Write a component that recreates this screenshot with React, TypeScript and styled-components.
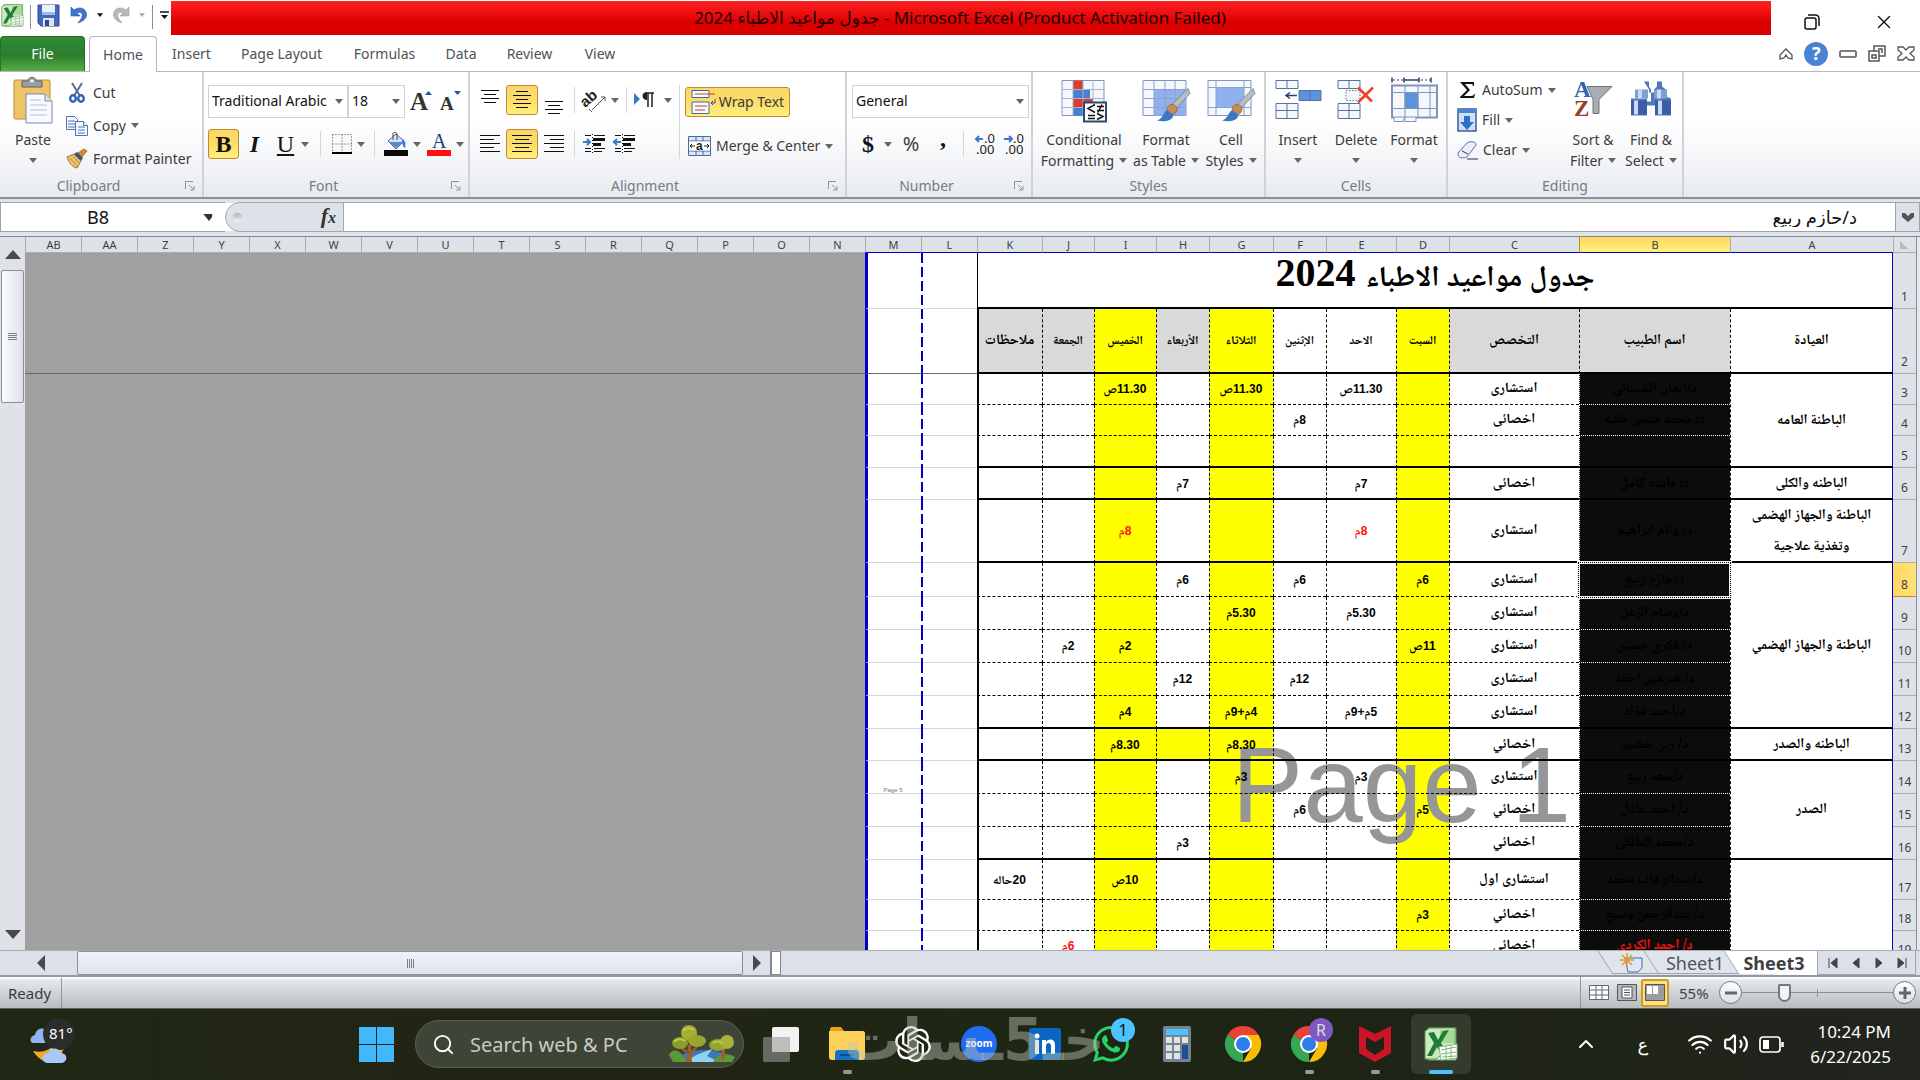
import React from "react";
import styled, { createGlobalStyle, css } from "styled-components";
import { SiOpenai, SiWhatsapp } from "react-icons/si";
import { ChevronUp, Wifi, Volume2, X, Search } from "lucide-react";

const ui = `"Segoe UI", "Noto Sans", "Open Sans", "DejaVu Sans", sans-serif`;
const arabic = `"Traditional Arabic", "Noto Naskh Arabic", "DejaVu Sans", sans-serif`;

const Global = createGlobalStyle`
  * { box-sizing: border-box; }
  body { margin: 0; overflow: hidden; font: 14px/20px ${ui}; color: #3b3b3b; background: #fff; }
  button { font: inherit; color: inherit; border: 0; padding: 0; background: none; }
  input, select { font: inherit; color: #111; border: 0; padding: 0; margin: 0; background: none; outline: 0; border-radius: 0; }
  svg { display: block; flex: none; overflow: visible; }
`;

const Page = styled.div`
  height: 100vh;
  display: flex;
  flex-direction: column;
`;

/* ---------- title bar ---------- */
const TitleBar = styled.header`
  height: 36px;
  flex: none;
  display: flex;
`;
const QuickAccess = styled.div`
  width: 171px;
  flex: none;
  display: flex;
  align-items: center;
  padding: 0 0 6px 1px;
`;
const QuickSep = styled.i<{ $gap: number }>`
  width: 1px;
  height: 24px;
  background: #8e8e8e;
  margin: 4px ${(p) => p.$gap}px 0;
`;
const QuickHistory = styled.div`
  display: flex;
  align-items: center;
  gap: 9px;
  margin-left: 10px;
`;
const TitleText = styled.h1`
  flex: 1;
  margin: 1px 0 1px;
  font: 17px/34px ${ui};
  color: #1a0000;
  text-align: center;
  padding-right: 22px;
  background: linear-gradient(#ff2222, #f01212 30%, #dd0000 62%, #da0000);
`;
const WindowButtons = styled.div`
  width: 149px;
  flex: none;
  display: flex;
  align-items: center;
  justify-content: space-between;
  padding: 8px 25px 0 33px;
  color: #111;
`;

/* ---------- ribbon ---------- */
const TabRow = styled.nav`
  height: 36px;
  flex: none;
  display: flex;
  align-items: stretch;
  border-bottom: 1px solid #b4b8be;
`;
const Tab = styled.button<{ $w: number; $kind?: "file" | "active" }>`
  width: ${(p) => p.$w}px;
  line-height: 36px;
  color: #4d5258;
  ${(p) =>
    p.$kind === "file" &&
    css`
      color: #fff;
      margin-right: 4px;
      border: 1px solid #2c6b2c;
      border-bottom: 0;
      border-radius: 4px 4px 0 0;
      line-height: 34px;
      background: linear-gradient(#2f8a35, #2c7d2c 55%, #58ad45);
    `}
  ${(p) =>
    p.$kind === "active" &&
    css`
      border: 1px solid #b4b8be;
      border-bottom: 0;
      border-radius: 4px 4px 0 0;
      line-height: 34px;
      height: 36px;
      background: #fff;
    `}
`;
const TabTools = styled.div`
  margin-left: auto;
  display: flex;
  align-items: center;
  gap: 11px;
  padding-right: 5px;
`;
const Ribbon = styled.section`
  height: 127px;
  flex: none;
  display: flex;
  border-bottom: 2px solid #8b9097;
  background: linear-gradient(#ffffff 40%, #f6f7f9 65%, #e8ebef);
`;
const Group = styled.div<{ $w: number }>`
  width: ${(p) => p.$w}px;
  flex: none;
  display: flex;
  flex-direction: column;
  border-right: 2px solid #cfd3d9;
`;
const GroupBody = styled.div<{ $pad?: string; $gap?: number }>`
  height: 103px;
  display: flex;
  padding: ${(p) => p.$pad || "0"};
  gap: ${(p) => p.$gap || 0}px;
`;
const GroupLabel = styled.div<{ $open?: boolean }>`
  display: flex;
  align-items: center;
  color: #737c88;
  padding-right: ${(p) => (p.$open ? 7 : 0)}px;
  line-height: 22px;
  span {
    flex: 1;
    text-align: center;
    padding-right: ${(p) => (p.$open ? 8 : 0)}px;
  }
`;
const Stack = styled.div<{ $gap?: number; $pad?: string; $w?: number }>`
  display: flex;
  flex-direction: column;
  gap: ${(p) => p.$gap || 0}px;
  padding: ${(p) => p.$pad || "0"};
  width: ${(p) => (p.$w ? p.$w + "px" : "auto")};
  flex: none;
`;
const Line = styled.div<{ $h?: number; $gap?: number; $ml?: number }>`
  display: flex;
  align-items: center;
  height: ${(p) => p.$h || 30}px;
  gap: ${(p) => p.$gap || 0}px;
  margin-left: ${(p) => p.$ml || 0}px;
`;
const BigButton = styled.button<{ $w: number }>`
  width: ${(p) => p.$w}px;
  flex: none;
  display: flex;
  flex-direction: column;
  align-items: center;
  white-space: nowrap;
  line-height: 21px;
  > svg:first-child {
    height: 47px;
    margin: 5px 0;
  }
`;
const TextRow = styled.span`
  display: flex;
  align-items: center;
  gap: 5px;
  height: 21px;
`;
const SmallButton = styled.button<{ $h?: number; $pl?: number }>`
  height: ${(p) => p.$h || 33}px;
  padding-left: ${(p) => p.$pl || 0}px;
  display: flex;
  align-items: center;
  gap: 5px;
  white-space: nowrap;
`;
const Tool = styled.button<{ $w: number; $on?: boolean; $serif?: boolean; $thin?: boolean; $size?: number; $lift?: number }>`
  width: ${(p) => p.$w}px;
  height: 30px;
  flex: none;
  display: flex;
  align-items: center;
  justify-content: center;
  gap: 3px;
  white-space: nowrap;
  color: ${(p) => (p.$serif ? "#111" : "inherit")};
  ${(p) => p.$size && `font-size: ${p.$size}px;`}
  ${(p) => p.$serif && `font: ${p.$thin ? 400 : 700} 24px/28px "Liberation Serif", serif;`}
  ${(p) => p.$lift && `padding-bottom: ${p.$lift}px;`}
  ${(p) =>
    p.$on &&
    css`
      border: 1px solid #c28a30;
      border-radius: 3px;
      background: linear-gradient(#fbd765, #fddc6c 50%, #fff07a);
    `}
`;
const Divider = styled.i<{ $h?: number; $m: number }>`
  width: 1px;
  height: ${(p) => p.$h || 26}px;
  margin: 0 ${(p) => p.$m}px;
  background: #d3d6db;
  flex: none;
`;
const Combo = styled.div<{ $w: number }>`
  width: ${(p) => p.$w}px;
  height: 33px;
  flex: none;
  display: flex;
  align-items: center;
  border: 1px solid #cdd2d8;
  background: #fff;
  padding: 0 4px 0 3px;
  select {
    appearance: none;
    flex: 1;
    min-width: 0;
    height: 28px;
    padding-bottom: 2px;
  }
`;

/* ---------- formula bar ---------- */
const FormulaBar = styled.div`
  height: 38px;
  flex: none;
  display: flex;
  padding: 3px 0 4px;
  background: #dfe3ea;
  border-bottom: 1px solid #85898f;
`;
const NameBox = styled.div`
  width: 225px;
  display: flex;
  align-items: center;
  border: 1px solid #9ea3aa;
  border-width: 1px 0 1px 1px;
  background: #fff;
  padding-right: 10px;
  input {
    width: 194px;
    text-align: center;
    font-size: 18px;
    margin-right: 8px;
  }
`;
const FxPill = styled.div`
  width: 119px;
  display: flex;
  align-items: center;
  justify-content: space-between;
  border: 1px solid #a4a9b0;
  border-radius: 16px 0 0 16px;
  background: #dde2e8;
  padding: 0 7px;
  box-shadow: -14px 0 0 -1px #fff;
  i {
    width: 9px;
    height: 9px;
    border-radius: 5px;
    background: linear-gradient(#aeb4bb, #f4f6f8);
  }
  b {
    font: italic bold 22px/24px "Liberation Serif", serif;
    color: #333;
  }
  small {
    font-size: 16px;
  }
`;
const FormulaInput = styled.input`
  && {
    flex: 1;
    min-width: 0;
    background: #fff;
    border-top: 1px solid #9ea3aa;
    border-bottom: 1px solid #9ea3aa;
    padding: 0 38px;
    font-size: 18px;
  }
`;
const FormulaDrop = styled.button`
  width: 25px;
  display: flex;
  align-items: center;
  justify-content: center;
  border: 1px solid #9ea3aa;
  background: #dde2e8;
`;

/* ---------- sheet ---------- */
const SheetArea = styled.main`
  flex: 1;
  min-height: 0;
  display: flex;
  background: #a0a0a0;
`;
const VScroll = styled.div`
  width: 25px;
  flex: none;
  display: flex;
  flex-direction: column;
  align-items: center;
  background: #dfe3e8;
  padding: 9px 0 8px;
`;
const VThumb = styled.div`
  width: 23px;
  height: 133px;
  margin: 8px 0 auto;
  border: 1px solid #8b9097;
  border-radius: 2px;
  background: linear-gradient(90deg, #fbfcfd, #dde1e7);
  display: flex;
  align-items: center;
  justify-content: center;
`;
const Canvas = styled.div`
  flex: 1;
  min-width: 0;
  overflow: hidden;
  position: relative;
`;
const Edge = styled.div`
  width: 4px;
  flex: none;
  background: #e4e7ee;
  border-left: 1px solid #8b9097;
`;
const Grid = styled.table`
  table-layout: fixed;
  border-collapse: separate;
  border-spacing: 0;
  width: 1891px;
  td,
  th {
    padding: 0;
  }
`;
const ColHead = styled.th<{ $on?: boolean; $page?: boolean }>`
  height: 16px;
  font: 11px/14px ${ui};
  color: #3c4148;
  background: ${(p) => (p.$on ? "linear-gradient(#ffd75e, #fff07e)" : "#dde2e7")};
  border-left: 1px solid ${(p) => (p.$on ? "#c28a30" : "#a9aeb5")};
  border-bottom: 1px solid ${(p) => (p.$page ? "#0000c8" : "#a9aeb5")};
  svg {
    margin: 0 8px;
  }
`;
const RowHead = styled.th<{ $on?: boolean }>`
  font: 12px/16px ${ui};
  color: #3c4148;
  vertical-align: bottom;
  && {
    padding: 0 0 3px 0;
  }
  background: ${(p) => (p.$on ? "linear-gradient(90deg, #ffd75e, #ffe27a)" : "#dde2e7")};
  border-bottom: 1px solid ${(p) => (p.$on ? "#c28a30" : "#a9aeb5")};
`;
type CellProps = {
  $bg?: string;
  $left?: string;
  $bottom?: string;
  $right?: string;
  $color?: string;
  $size?: number;
  $digits?: boolean;
};
const Cell = styled.td<CellProps>`
  position: relative;
  text-align: center;
  vertical-align: middle;
  background: ${(p) => p.$bg || "#fff"};
  color: ${(p) => p.$color || "#000"};
  font: bold ${(p) => p.$size || 14}px/31px ${(p) => (p.$digits ? `"Liberation Sans", ${arabic}` : arabic)};
  white-space: nowrap;
  &::after {
    content: "";
    position: absolute;
    inset: 0;
    z-index: 2;
    border-left: ${(p) => p.$left || "0"};
    border-right: ${(p) => p.$right || "0"};
    border-bottom: ${(p) => p.$bottom || "0"};
  }
  span {
    position: relative;
    z-index: 3;
    white-space: pre-line;
  }
`;
const TitleCell = styled(Cell)`
  font: bold 40px/40px "Liberation Serif", ${arabic};
  vertical-align: top;
  b {
    font-size: 29px;
  }
`;
const Outside = styled.td<{ $line?: boolean }>`
  background: #a0a0a0;
  border-bottom: ${(p) => (p.$line ? "1px solid #6a6a6a" : "0")};
`;
const ActiveCell = styled(Cell)`
  &::after {
    inset: -2px;
    z-index: 4;
    border: 3px solid #f4f4f4;
    outline: 1px dotted #000;
    outline-offset: -2px;
  }
`;
const PageBreak = styled(Cell)`
  &::before {
    content: "";
    position: absolute;
    inset: 0 auto 0 0;
    width: 2px;
    z-index: 3;
    background: repeating-linear-gradient(#0000c8 0 10px, #fff 10px 14px);
  }
`;
const MarkCell = styled(Cell)`
  vertical-align: bottom;
  line-height: 8px;
`;
const PageMark = styled.div`
  position: absolute;
  z-index: 1;
  right: 345px;
  top: 486px;
  font: 107px/124px "Liberation Sans", Arial, sans-serif;
  color: #969696;
`;
const TinyMark = styled.span`
  && {
    font: 6px/8px "Liberation Sans", sans-serif;
    color: #777;
  }
`;

/* ---------- bottom strips ---------- */
const TabStrip = styled.div`
  height: 25px;
  flex: none;
  display: flex;
  background: #dce1e9;
  border-top: 1px solid #a9aeb5;
`;
const HScroll = styled.div`
  width: 745px;
  margin-left: 25px;
  max-width: 50%;
  display: flex;
  align-items: center;
  gap: 6px;
  padding: 0 5px 0 8px;
`;
const HThumb = styled.div`
  flex: 1;
  margin-left: 22px;
  height: 24px;
  border: 1px solid #8b9097;
  border-radius: 2px;
  background: linear-gradient(#f0f3f8, #dfe3ea);
  display: flex;
  align-items: center;
  justify-content: center;
`;
const Split = styled.i`
  width: 11px;
  height: 24px;
  border: 2px solid #85898f;
  border-width: 1px 1px 1px 2px;
  background: #fff;
`;
const SheetTabs = styled.div`
  margin-left: auto;
  display: flex;
`;
const SheetTab = styled.button<{ $w: number; $on?: boolean }>`
  width: ${(p) => p.$w}px;
  position: relative;
  z-index: 0;
  display: flex;
  align-items: center;
  justify-content: center;
  font-size: 18px;
  font-weight: ${(p) => (p.$on ? 700 : 400)};
  color: ${(p) => (p.$on ? "#3f3f3f" : "#4f555c")};
  padding-left: ${(p) => (p.$on ? 0 : 8)}px;
  ${(p) => p.$on && "background: linear-gradient(90deg, transparent 50%, #fff 50%);"}
  &::before {
    content: "";
    position: absolute;
    z-index: -1;
    inset: 0 ${(p) => (p.$on ? 10 : 0)}px 1px 0;
    background: ${(p) => (p.$on ? "#fff" : "#dfe5ea")};
    border-left: 1px solid #a0a5ad;
    border-bottom: ${(p) => (p.$on ? "0" : "1px solid #a0a5ad")};
    transform: skewX(33deg);
  }
`;
const NavButtons = styled.div`
  width: 99px;
  margin-right: 4px;
  display: flex;
  align-items: center;
  justify-content: space-between;
  padding: 0 8px 0 10px;
  border: 1px solid #a0a5ad;
  border-top: 0;
`;
const StatusBar = styled.footer`
  height: 34px;
  flex: none;
  display: flex;
  align-items: center;
  border-top: 2px solid #9297a3;
  border-bottom: 1px solid #5b5f60;
  background: linear-gradient(#ffffff, #e4e7ea 12%, #d3d7dc 45%, #b9bdc1);
`;
const Ready = styled.div`
  width: 62px;
  padding-left: 8px;
  font-size: 15px;
  line-height: 30px;
  border-right: 1px solid #8f9499;
`;
const StatusRight = styled.div`
  margin-left: auto;
  display: flex;
  align-items: center;
  height: 31px;
  border-left: 1px solid #8f9499;
  padding: 0 4px 0 4px;
`;
const ViewButton = styled.button<{ $on?: boolean }>`
  width: 28px;
  height: 28px;
  display: flex;
  align-items: center;
  justify-content: center;
  ${(p) =>
    p.$on &&
    css`
      border: 2px solid #d09a2c;
      border-radius: 3px;
      background: #ffe37a;
    `}
`;
const ZoomValue = styled.span`
  width: 50px;
  padding-left: 10px;
  font-size: 15px;
  color: #444;
`;
const RoundButton = styled.button`
  width: 23px;
  height: 23px;
  border: 1px solid #75797e;
  border-radius: 50%;
  background: linear-gradient(#fff, #dcdfe2);
  display: flex;
  align-items: center;
  justify-content: center;
`;
const Slider = styled.input`
  && {
    appearance: none;
    width: 151px;
    height: 20px;
    background: linear-gradient(#8d9196, #8d9196) 0 9px / 100% 1px no-repeat,
      linear-gradient(#8d9196, #8d9196) 50% 6px / 1px 8px no-repeat;
  }
  &::-webkit-slider-thumb {
    appearance: none;
    width: 13px;
    height: 18px;
    border: 2px solid #75797e;
    border-radius: 2px 2px 7px 7px;
    background: #f2f3f4;
  }
`;

/* ---------- taskbar ---------- */
const Taskbar = styled.footer`
  height: 71px;
  flex: none;
  display: grid;
  grid-template-columns: 343px 1fr auto;
  align-items: center;
  background: linear-gradient(90deg, #1f2715, #232514 25%, #1e2614 50%, #1e2415 75%, #22241f);
  color: #fff;
  padding-bottom: 1px;
`;
const Weather = styled.button`
  width: 60px;
  margin-left: 24px;
`;
const Apps = styled.div`
  position: relative;
  display: flex;
  align-items: center;
`;
const SearchBox = styled.label`
  width: 329px;
  height: 48px;
  margin: 0 4px 0 6px;
  display: flex;
  align-items: center;
  border: 1px solid #5c6152;
  border-radius: 24px;
  background: #3e4436;
  padding: 0 8px 0 16px;
  gap: 15px;
  input {
    flex: 1;
    min-width: 0;
    color: #fff;
    font-size: 20px;
  }
  input::placeholder {
    color: #c9ccc3;
    opacity: 1;
  }
`;
const AppButton = styled.button<{ $on?: boolean; $run?: boolean }>`
  width: 60px;
  height: 60px;
  margin: 0 3px;
  flex: none;
  position: relative;
  border-radius: 6px;
  display: flex;
  align-items: center;
  justify-content: center;
  background: ${(p) => (p.$on ? "#343a2c" : "none")};
  &::after {
    content: "";
    position: absolute;
    bottom: 0;
    left: ${(p) => (p.$on ? 18 : 26)}px;
    width: ${(p) => (p.$on ? 24 : 9)}px;
    height: 4px;
    border-radius: 2px;
    background: ${(p) => (p.$on ? "#4cc2ff" : p.$run ? "#9a9a9a" : "none")};
  }
`;
const Badge = styled.i<{ $bg: string; $fg: string }>`
  position: absolute;
  top: 4px;
  right: 6px;
  width: 24px;
  height: 24px;
  border-radius: 50%;
  font: 16px/24px ${ui};
  text-align: center;
  color: ${(p) => p.$fg};
  background: ${(p) => p.$bg};
`;
const Khamsat = styled.div`
  position: absolute;
  left: 501px;
  top: -6px;
  z-index: 2;
  font: bold 58px/64px "DejaVu Sans", sans-serif;
  color: rgba(190, 195, 185, 0.45);
  pointer-events: none;
`;
const Tray = styled.div`
  display: flex;
  align-items: center;
  padding-right: 29px;
`;
const Lang = styled.button`
  margin: 0 39px 0 40px;
  font-size: 18px;
`;
const TrayIcon = styled.span`
  margin: 0 10px;
`;
const Clock = styled.time`
  font-size: 17px;
  line-height: 25px;
  text-align: right;
  margin-left: 26px;
`;

/* ---------- icons ---------- */
const Caret = ({ c = "#666", s = 8 }: { c?: string; s?: number }) => (
  <svg width={s} height={s / 2 + 1} viewBox="0 0 8 5">
    <path d="M0 0h8L4 5z" fill={c} />
  </svg>
);
const Launcher = () => (
  <svg width="10" height="10" viewBox="0 0 10 10" fill="none" stroke="#8b929c">
    <path d="M.5 8V.5H8M4 4l4 4M9 5v4H5" />
  </svg>
);
const arrowPaths = {
  up: "M0 13 8 4l8 9z",
  down: "M0 4 8 13l8-9z",
  left: "M12 0 4 8l8 8z",
  right: "M4 0l8 8-8 8z",
};
const Arrow = ({ to }: { to: keyof typeof arrowPaths }) => (
  <svg width="16" height="16" viewBox="0 0 16 16">
    <path d={arrowPaths[to]} fill="#4a4a4a" />
  </svg>
);
const Grip = ({ v }: { v?: boolean }) => (
  <svg width="9" height="9" viewBox="0 0 9 9" stroke="#7b8087">
    <path d={v ? "M0 1.500h9M0 3.500h9M0 5.500h9M0 7.500h9" : "M1.500 0v9M3.500 0v9M5.500 0v9M7.500 0v9"} />
  </svg>
);
const ExcelIcon = ({ s }: { s: number }) => (
  <svg width={s} height={s} viewBox="0 0 34 34">
    <path d="M4 1h28v32H4z" fill="#f2f8ef" stroke="#5e9e58" />
    <path d="M1 4 6 1h25v17L12 32H1z" fill="#cfe8c4" stroke="#4c9a4a" />
    <path d="M16 3h14v13H16z" fill="#a7d896" />
    <path d="m4 6 6-1 4 8 5-9 6-1-8 13 7 11-6 1-5-8-5 9H3l7-13z" fill="#1e7d35" />
    <path d="m15 20 18-3v14l-16 2z" fill="#fff" stroke="#8bbd83" />
    <path d="m17 23 15-3M17 27l15-2M18 30l14-1M22 19v13M27 18v14" stroke="#7fb777" />
  </svg>
);
const SaveIcon = () => (
  <svg width="23" height="23" viewBox="0 0 23 23">
    <path d="M1 1h21v21H4l-3-3z" fill="#4268bd" stroke="#2c4a94" />
    <path d="M5 1h13v10H5z" fill="#eaf1fc" />
    <path d="M5 8h13v3H5z" fill="#9fbbe8" />
    <path d="M6 14h11v8H6z" fill="#dfe4ee" />
    <path d="M8 16h4v6H8z" fill="#2c4a94" />
  </svg>
);
const UndoIcon = ({ redo }: { redo?: boolean }) => (
  <svg width="18" height="18" viewBox="0 0 18 18">
    <g transform={redo ? "matrix(-1 0 0 1 18 0)" : undefined}>
      <path d="M1 1v9h9L7 7c4-2 7 1 4 6l-3 4c7-2 10-7 8-11C14 1 8 1 4 4z" fill={redo ? "#b5b8bc" : "#3f76cf"} stroke={redo ? "#9a9da1" : "#2a55a5"} strokeWidth=".6" />
    </g>
  </svg>
);
const PasteIcon = () => (
  <svg width="40" height="47" viewBox="0 0 40 47">
    <rect x="1" y="3" width="36" height="39" rx="1.5" fill="#efc565" stroke="#b98c35" />
    <path d="M9 4h6c0-5 8-5 8 0h6v6H9z" fill="#9aa0a6" stroke="#5d6268" />
    <circle cx="19" cy="4" r="1.6" fill="#fff" />
    <path d="M13 17h19l7 7v22H13z" fill="#f7faff" stroke="#7488ab" />
    <path d="M32 17v7h7" fill="#dbe5f6" stroke="#7488ab" />
    <path d="M17 23h11M17 28h17M17 33h17M17 38h17" stroke="#b3c0d8" />
  </svg>
);
const CutIcon = () => (
  <svg width="22" height="20" viewBox="0 0 22 20" fill="none">
    <path d="m6 0 8 13M16 0 8 13" stroke="#5b6f94" strokeWidth="2" />
    <ellipse cx="7" cy="15.5" rx="2.8" ry="3.2" stroke="#2f62b5" strokeWidth="2.4" />
    <ellipse cx="15" cy="15.5" rx="2.8" ry="3.2" stroke="#2f62b5" strokeWidth="2.4" />
  </svg>
);
const CopyIcon = () => (
  <svg width="22" height="20" viewBox="0 0 22 20" fill="#f4f8ff" stroke="#5175b3">
    <path d="M.5.5h8l3 3v10H.5z" />
    <path d="M2 5h7M2 8h7M2 11h7" />
    <path d="M9.5 5.500h8l4 4v10h-12z" />
    <path d="M17.500 5.500v4h4M12 11h7M12 14h7M12 17h7" />
  </svg>
);
const BrushIcon = () => (
  <svg width="22" height="20" viewBox="0 0 22 20">
    <path d="m1 8 7-3 7 7-4 7C6 18 3 14 1 8z" fill="#e9c46d" stroke="#9b7a34" />
    <path d="m8 5 3-2 6 6-2 3z" fill="#44546e" />
    <path d="m12 4 6-4 3 2-5 6z" fill="#d88b35" stroke="#8b5518" strokeWidth=".7" />
    <path d="m4 9 7 8M7 7l6 7" stroke="#b98f3f" />
  </svg>
);
const GrowA = ({ s, up }: { s: number; up?: boolean }) => (
  <svg width="22" height="24" viewBox="0 0 22 24">
    <text x="0" y="20" fontSize={s} fontWeight="700" fontFamily="Liberation Serif" fill="#333">A</text>
    <path d={up ? "M15 5h7l-3.500-4z" : "M14 1h7l-3.500 4z"} fill="#27509b" />
  </svg>
);
const BorderIcon = () => (
  <svg width="20" height="20" viewBox="0 0 20 20" fill="none" stroke="#444">
    <path d="M.5.5h19v18M.5.500v18M10 .5v18M.5 10h19" strokeDasharray="1 2" />
    <path d="M0 19h20" strokeWidth="2" stroke="#000" />
  </svg>
);
const BucketIcon = () => (
  <svg width="24" height="24" viewBox="0 0 24 24">
    <path d="m4 9 8-7 8 7-8 8z" fill="#d6e3f6" stroke="#4e6a99" />
    <path d="m5 10 7 6 7-6z" fill="#5b86c9" />
    <path d="M9 8V2c0-2 4-2 4 0v6" fill="none" stroke="#444" />
    <path d="M18 7c3 1 4 4 3 9-2-1-3-4-3-9z" fill="#3b77cc" />
    <path d="M0 18h24v6H0z" fill="#0a0a0a" />
  </svg>
);
const FontColorIcon = () => (
  <svg width="24" height="24" viewBox="0 0 24 24">
    <text x="5" y="16" fontSize="20" fontFamily="Liberation Serif" fill="#1f3a7a">A</text>
    <path d="M0 18h24v6H0z" fill="#fe0f0f" />
  </svg>
);
const linesFor: Record<string, string> = {
  top: "M1 .5h18M4 4.500h12M1 8.500h18M4 12.500h12",
  mid: "M1 5.500h18M4 9.500h12M1 13.500h18M4 17.500h12M4 1.500h12",
  bottom: "M1 11.500h18M4 15.500h12M1 19.500h18M4 23.500h12",
  left: "M0 1.500h20M0 5.500h14M0 9.500h20M0 13.500h14M0 17.500h20",
  center: "M0 1.500h20M3 5.500h14M0 9.500h20M3 13.500h14M0 17.500h20",
  right: "M0 1.500h20M6 5.500h14M0 9.500h20M6 13.500h14M0 17.500h20",
};
const Lines = ({ k }: { k: string }) => (
  <svg width="20" height="20" viewBox="0 0 20 20" stroke="#111" fill="none">
    <path d={linesFor[k]} />
  </svg>
);
const OrientIcon = () => (
  <svg width="24" height="24" viewBox="0 0 24 24">
    <g transform="rotate(-42 8 14)">
      <text x="-1" y="14" fontSize="15" fontWeight="700" fontFamily="Liberation Sans" fill="#222">ab</text>
    </g>
    <path d="M8 22 21 9M21 9h-4M21 9v4M5 21l3 3" stroke="#555" fill="none" />
  </svg>
);
const RtlIcon = () => (
  <svg width="20" height="16" viewBox="0 0 20 16">
    <path d="M0 1v12l6-6z" fill="#3b77cc" />
    <path d="M12 1h8M14 1v14M18 1v14" stroke="#222" strokeWidth="1.500" />
    <path d="M13 0c-6 0-6 8 0 8z" fill="#222" />
  </svg>
);
const WrapIcon = () => (
  <svg width="25" height="24" viewBox="0 0 25 24" fill="#f6f9ff" stroke="#4a67a0">
    <path d="M1 .5h17v7H1zM1 12h17v11.500H1z" />
    <path d="M4 4h20M4 16h12M4 20h10" stroke="#b5492b" />
    <path d="M24 9v4h-4m0 0 2-2m-2 2 2 2" fill="none" stroke="#27509b" />
  </svg>
);
const MergeIcon = () => (
  <svg width="23" height="20" viewBox="0 0 23 20">
    <path d="M.5.5h22v19H.5z" fill="#dbe6f7" stroke="#4a67a0" />
    <path d="M.5 5h22M.5 15h22M8 .5V5m7-4.500V5M8 15v4.500M15 15v4.500" stroke="#4a67a0" />
    <path d="M1 5.500h21v9H1z" fill="#fff" />
    <path d="M2 10h5M4 8l-2 2 2 2M21 10h-5M19 8l2 2-2 2" stroke="#222" fill="none" />
    <text x="8" y="14" fontSize="12" fontWeight="700" fontFamily="Liberation Sans" fill="#222">a</text>
  </svg>
);
const IndentIcon = ({ out }: { out?: boolean }) => (
  <svg width="22" height="20" viewBox="0 0 22 20">
    <path d="M2 1.500h6M11 1.500h11M2 17.500h6M11 17.500h8M2 14.500h6M11 14.500h11" stroke="#111" />
    <path d="M10 4h12v3H10zM10 9h8v3h-8z" fill="#111" />
    <path d="M9.500 0v20" stroke="#111" strokeDasharray="1 2" />
    <path d={out ? "M0 8h8M4 5 1 8l3 3" : "M0 8h7M4 5l3 3-3 3"} stroke="#3b77cc" strokeWidth="2" fill="none" />
  </svg>
);
const DecimalIcon = ({ dec }: { dec?: boolean }) => (
  <svg width="21" height="20" viewBox="0 0 21 20">
    <path d={dec ? "M0 5h8M5 2l3 3-3 3" : "M1 5h7M4 2 1 5l3 3"} stroke="#3b77cc" strokeWidth="2" fill="none" />
    <text x="9" y="9" fontSize="13" fontFamily="Noto Sans" fill="#222">.0</text>
    <text x="1" y="20" fontSize="13" fontFamily="Noto Sans" fill="#222">.00</text>
  </svg>
);
const Brush = () => (
  <g>
    <path d="m46 10-16 16 4 4 14-15z" fill="#b9bcc0" stroke="#6f7378" strokeWidth=".7" />
    <circle cx="30" cy="31" r="5" fill="#c98b52" stroke="#7c5228" strokeWidth=".6" />
    <path d="M26 32c-5 0-4 8-11 10 8 2 17 0 16-6z" fill="#3a78c5" />
  </g>
);
const CondIcon = () => (
  <svg width="47" height="44" viewBox="0 0 47 44">
    <path d="M1 2h42v35H1z" fill="#f4f8fd" stroke="#7f95b8" />
    <path d="M12 2h10v9H12zM12 20h20v9H12z" fill="#dc3d2b" />
    <path d="M12 11h17v9H12zM12 29h10v8H12z" fill="#447fd0" />
    <path d="M1 11h42M1 20h42M1 29h42M12 2v35M22 2v35M32 2v35" stroke="#a6b5cd" fill="none" />
    <path d="M23 24h22v19H23z" fill="#fbfdff" stroke="#33466f" strokeWidth="2" />
    <path d="m34 26-7 4 7 4M27 37h7M27 40h7M36 28h7M36 32h7m-2-6-4 8M36 35l6 3-6 3" stroke="#111" strokeWidth="1.500" fill="none" />
  </svg>
);
const TableIcon = () => (
  <svg width="48" height="44" viewBox="0 0 48 44">
    <path d="M1 2h43v35H1z" fill="#f4f8fd" stroke="#7f95b8" />
    <path d="M12 11h32v26H12z" fill="#8fb2ef" />
    <path d="M1 11h43M1 20h43M1 29h43M12 2v35M23 2v35M33 2v35" stroke="#8ca2c6" fill="none" />
    <Brush />
  </svg>
);
const CellStyleIcon = () => (
  <svg width="48" height="44" viewBox="0 0 48 44">
    <path d="M1 2h43v35H1z" fill="#f4f8fd" stroke="#7f95b8" />
    <path d="M9 9h28v20H9z" fill="#8fb2ef" />
    <path d="M1 9h43M1 29h43M9 2v35M37 2v35" stroke="#8ca2c6" fill="none" />
    <Brush />
  </svg>
);
const InsertIcon = () => (
  <svg width="47" height="44" viewBox="0 0 47 44" fill="#f4f8fd" stroke="#5a719f">
    <path d="M1 2h22v8H1zM12 2v8M1 25h22v15H1zM12 25v15M1 32h22" />
    <path d="M24 12h22v10H24z" fill="#5c93dc" />
    <path d="M35 12v10" />
    <path d="M22 17H11m4-3-4 3 4 3" stroke="#27406f" strokeWidth="1.500" fill="none" />
  </svg>
);
const DeleteIcon = () => (
  <svg width="38" height="44" viewBox="0 0 38 44" fill="#f4f8fd" stroke="#5a719f">
    <path d="M1 2h22v8H1zM12 2v8M1 25h22v15H1zM12 25v15M1 32h22" />
    <path d="M9 12h14v10H9z" strokeDasharray="1.500 1.500" />
    <path d="m21 9 14 14M36 9 21 24" stroke="#e8442c" strokeWidth="2.600" />
  </svg>
);
const FormatIcon = () => (
  <svg width="47" height="46" viewBox="0 0 47 46" fill="#f4f8fd" stroke="#7f95b8">
    <path d="M1 8h45v32H1z" strokeWidth="2" />
    <path d="M14 15h13v16H14z" fill="#5c93dc" />
    <path d="M1 15h45M1 31h45M14 8v32M27 8v32M39 8v32" fill="none" />
    <path d="M1 0v5M13 0v5M28 0v5M40 0v5M13 2.500h15" stroke="#27406f" strokeWidth="1.500" />
    <path d="M2 2.500h10M30 2.500h10" stroke="#27406f" strokeDasharray="2 2" />
    <path d="M3 40v4h10v-4M14 40v4h11v-4" />
  </svg>
);
const SigmaIcon = () => (
  <svg width="20" height="18" viewBox="0 0 20 18">
    <path d="M3 1h14v4h-1c0-2-1-2-3-2H8l5 6-6 6h7c2 0 3-1 3-2h1l-1 4H3v-1l7-7-7-8z" fill="#111" />
  </svg>
);
const FillIcon = () => (
  <svg width="20" height="24" viewBox="0 0 20 24">
    <path d="M1 1h18v22H1z" fill="#cfe0f6" stroke="#3c5a94" strokeWidth="1.500" />
    <path d="M1 1h18v4H1z" fill="#4c83d4" />
    <path d="M7 8h6v6h4l-7 8-7-8h4z" fill="#2f6fc9" />
  </svg>
);
const ClearIcon = () => (
  <svg width="21" height="19" viewBox="0 0 21 19">
    <path d="m1 12 9-10c3-2 9-2 9 2l-9 12c-3 2-10 1-9-4z" fill="#e9f0fb" stroke="#5a719f" />
    <path d="m5 10 6 3M10 18h11" stroke="#333" />
  </svg>
);
const SortIcon = () => (
  <svg width="40" height="44" viewBox="0 0 40 44">
    <path d="M14 8h25L26 21v14h-6V21z" fill="#a9acb0" stroke="#6f7378" />
    <text x="1" y="18" fontSize="23" fontWeight="700" fontFamily="Liberation Serif" fill="#2f62b5">A</text>
    <text x="1" y="37" fontSize="23" fontWeight="700" fontFamily="Liberation Serif" fill="#9b3c24">Z</text>
  </svg>
);
const FindIcon = () => (
  <svg width="42" height="44" viewBox="0 0 42 44">
    <path d="M14 3h5v5l2 3v12h-4V20H1v17h16V27h8v10h16V20l-5-2V11l-4-3V3h-5v5l-3 3v3h-5v-3z" fill="#5277b5" />
    <path d="M1 22h16v14H1zM25 22h16v14H25z" fill="#3b5da3" />
    <path d="M5 11h13v9H5zM24 11h13v9H24z" fill="#7fa0d6" />
    <path d="M4 22h4v14H4zM28 22h4v14h-4zM8 11h4v9H8zM27 11h4v9h-4z" fill="#c8daf4" />
  </svg>
);
const Chrome = () => (
  <svg width="36" height="36" viewBox="0 0 36 36">
    <path d="M18 18 2.400 9A18 18 0 0 1 33.600 9z" fill="#ea4335" />
    <path d="M18 18v18A18 18 0 0 1 2.400 9z" fill="#34a853" />
    <path d="M18 9h15.600A18 18 0 0 1 18 36l8-13.500z" fill="#fbbc05" />
    <circle cx="18" cy="18" r="9" fill="#fff" />
    <circle cx="18" cy="18" r="7" fill="#2f7de9" />
  </svg>
);
const Folder = () => (
  <svg width="36" height="34" viewBox="0 0 36 34">
    <path d="M1 2c0-1 1-2 2-2h9l3 4H1z" fill="#e8a11c" />
    <path d="M0 4h34c1 0 2 1 2 2v24c0 2-1 3-3 3H3c-2 0-3-1-3-3z" fill="#fdd05a" />
    <path d="M6 33v-6c0-3 1-4 4-4h16c3 0 4 1 4 4v6z" fill="#1272c4" />
    <path d="M11 27h14v2H11z" fill="#0b4c8c" />
  </svg>
);
const WeatherIcon = () => (
  <svg width="60" height="46" viewBox="0 0 60 46">
    <path d="M8 22c-4-4 1-8 3-8 1-6 7-8 10-5v13z" fill="#8fb6f2" />
    <path d="M30 24c8 1 9-1 10 3l-6 14c-12 3-20-3-25-11 10 2 17-1 21-6z" fill="#f4a92c" />
    <circle cx="35" cy="13" r="16" fill="#2b2d2a" />
    <path d="M23 42c-6-1-6-9 1-10 1-6 11-6 13 0 7 0 7 9 1 10z" fill="#a9c8f8" />
    <text x="25" y="18" fontSize="15" fontFamily="Noto Sans" fill="#fff">81°</text>
  </svg>
);
const Trees = () => (
  <svg width="66" height="38" viewBox="0 0 66 38">
    <path d="M8 34c10-12 44-12 56 0l-4 3H10z" fill="#3d77b8" />
    <path d="M18 37c6-8 20-10 26-14l-6 8 12 6z" fill="#8fd3f0" />
    <path d="M0 30c2-6 10-6 13 0l5 7H4zM46 34c6-6 14-6 20-2l-3 5H44z" fill="#5a9a35" />
    <path d="M19 20h3l1 17h-6zM53 22h3v12h-4zM20 28l8-8 1 2-8 9zM20 27l-8-6-1 2 8 7z" fill="#a65a2c" />
    <circle cx="20" cy="8" r="8" fill="#a3ae35" />
    <ellipse cx="11" cy="18" rx="8" ry="6" fill="#8c9d2e" />
    <ellipse cx="28" cy="16" rx="9" ry="6" fill="#97a633" />
    <ellipse cx="49" cy="20" rx="9" ry="6" fill="#93a331" />
    <circle cx="58" cy="17" r="7" fill="#a8b33c" />
    <path d="M14 6c2-3 8-4 11-1M5 17c2-3 8-4 11-1M44 18c3-2 6-2 9 0" stroke="#c8c64a" strokeWidth="2" fill="none" />
  </svg>
);
const Calc = () => (
  <svg width="28" height="36" viewBox="0 0 28 36">
    <rect width="28" height="36" rx="2" fill="#78828e" />
    <path d="M3 3h22v6H3z" fill="#4cc2ff" />
    <path d="M3 11h6v6H3zM11 11h6v6h-6zM19 11h6v6h-6zM3 19h6v6H3zM11 19h6v6h-6zM3 27h6v6H3zM11 27h6v6h-6z" fill="#dfe3e8" />
    <path d="M19 19h6v14h-6z" fill="#1b4f96" />
  </svg>
);
const McAfee = () => (
  <svg width="32" height="36" viewBox="0 0 32 36">
    <path d="m0 0 16 8L32 0v27l-16 9L0 27zm7 11v12l9 6 9-6V11l-9 5z" fill="#c8152a" fillRule="evenodd" />
  </svg>
);

/* ---------- sheet data ---------- */
const SP = "استشارى";
const AK = "اخصائى";
const AKY = "اخصائي";
type Row = {
  n: number;
  h: number;
  a?: [string, number];
  b: string;
  c: string;
  t?: Record<string, string>;
  thick?: boolean;
};
const rows: Row[] = [
  { n: 3, h: 31, a: ["الباطنة العامه", 3], b: "د/ايمان الشيتانى", c: SP, t: { E: "11.30ص", G: "11.30ص", I: "11.30ص" } },
  { n: 4, h: 31, b: "د/ محمد فتحى طلبه", c: AK, t: { F: "8م" } },
  { n: 5, h: 32, b: "", c: "", thick: true },
  { n: 6, h: 32, a: ["الباطنه والكلى", 1], b: "د/ فايده كامل", c: AK, t: { E: "7م", H: "7م" }, thick: true },
  { n: 7, h: 63, a: ["الباطنة والجهاز الهضمى\nوتغذية علاجية", 1], b: "د/ وئام ابراهيم", c: SP, t: { E: "!8م", I: "!8م" }, thick: true },
  { n: 8, h: 34, a: ["الباطنة والجهاز الهضمي", 5], b: "د/حازم ربيع", c: SP, t: { D: "6م", F: "6م", H: "6م" } },
  { n: 9, h: 33, b: "د/وسام الزغل", c: SP, t: { E: "5.30م", G: "5.30م" } },
  { n: 10, h: 33, b: "د/ فكري حسين", c: SP, t: { D: "11ص", I: "2م", J: "2م" } },
  { n: 11, h: 33, b: "د/ هيرمين احمد", c: SP, t: { F: "12م", H: "12م" } },
  { n: 12, h: 33, b: "د/احمد فؤاد", c: SP, t: { E: "5م+9م", G: "4م+9م", I: "4م" }, thick: true },
  { n: 13, h: 32, a: ["الباطنه والصدر", 1], b: "د/ ربى خضير", c: AKY, t: { G: "8.30م", I: "8.30م" }, thick: true },
  { n: 14, h: 33, a: ["الصدر", 3], b: "د/سعد ربيع", c: SP, t: { E: "3م", G: "3م" } },
  { n: 15, h: 33, b: "د/ احمد عادل", c: AKY, t: { D: "5م", F: "6م" } },
  { n: 16, h: 33, b: "د/محمد المالكى", c: AKY, t: { H: "3م" }, thick: true },
  { n: 17, h: 40, a: ["", 3], b: "د/عبدالوهاب محمد", c: "استشارى اول", t: { I: "10ص", K: "20حاله" } },
  { n: 18, h: 31, b: "د/ عبدالرحمن وسيع", c: AKY, t: { D: "3م" } },
  { n: 19, h: 31, b: "!د/ احمد الكردى", c: AKY, t: { J: "!6م" } },
];
const dayCols = ["D", "E", "F", "G", "H", "I", "J", "K"];
const yellowCols = ["D", "G", "I"];
const outerCols = ["N", "O", "P", "Q", "R", "S", "T", "U", "V", "W", "X", "Y", "Z", "AA", "AB"];
const pageCols = ["A", "B", "C", ...dayCols, "L", "M"];
const widths = [23, 163, 151, 130, 53, 70, 53, 64, 53, 62, 52, 65, 56, 56, ...outerCols.map(() => 56)];
const heads: [string, string, string, number][] = [
  ["A", "العيادة", "#fff", 14],
  ["B", "اسم الطبيب", "#d9d9d9", 14],
  ["C", "التخصص", "#d9d9d9", 14],
  ["D", "السبت", "#ff0", 12],
  ["E", "الاحد", "#fff", 12],
  ["F", "الإثنين", "#fff", 12],
  ["G", "الثلاثاء", "#ff0", 12],
  ["H", "الأربعاء", "#d9d9d9", 12],
  ["I", "الخميس", "#ff0", 12],
  ["J", "الجمعة", "#d9d9d9", 12],
  ["K", "ملاحظات", "#d9d9d9", 14],
];
const DASH = "1px dashed #000";
const THICK = "2px solid #000";
const GRAY = "1px solid #d4d6da";
const FREEZE = "1px solid #6a6a6a";
const PAGE_EDGE = "3px solid #0000c8";
const PAGE_SIDE = "1px solid #0000c8";
const strip = (s: string) => s.replace("!", "");
const red = (s: string) => (s.startsWith("!") ? "#fe0f0f" : undefined);

const Sheet = () => (
  <Grid dir="rtl">
    <colgroup>
      {widths.map((w, i) => (
        <col key={i} width={w} />
      ))}
    </colgroup>
    <thead>
      <tr>
        <ColHead aria-label="Select all">
          <svg width="8" height="8" viewBox="0 0 8 8">
            <path d="M0 0v8h8z" fill="#b4b9c0" />
          </svg>
        </ColHead>
        {pageCols.map((c) => (
          <ColHead key={c} $page $on={c === "B"}>{c}</ColHead>
        ))}
        {outerCols.map((c) => (
          <ColHead key={c}>{c}</ColHead>
        ))}
      </tr>
    </thead>
    <tbody>
      <tr style={{ height: 56 }}>
        <RowHead>1</RowHead>
        <TitleCell colSpan={11} $bottom={THICK} $left="1px solid #000" $right={PAGE_SIDE}>
          <span><b>جدول مواعيد الاطباء</b> 2024</span>
        </TitleCell>
        <PageBreak $bottom={GRAY} />
        <Cell $bottom={GRAY} $left={PAGE_EDGE} />
        <Outside colSpan={15} rowSpan={2} $line />
      </tr>
      <tr style={{ height: 65 }}>
        <RowHead>2</RowHead>
        {heads.map(([k, t, bg, s]) => (
          <Cell key={k} $bg={bg} $size={s} $bottom={THICK} $left={k === "K" ? THICK : DASH} $right={k === "A" ? PAGE_SIDE : undefined}>
            <span>{t}</span>
          </Cell>
        ))}
        <PageBreak $bottom={FREEZE} />
        <Cell $bottom={FREEZE} $left={PAGE_EDGE} />
      </tr>
      {rows.map((r, i) => {
        const bottom = r.thick ? THICK : DASH;
        const Doctor = r.n === 8 ? ActiveCell : Cell;
        return (
          <tr key={r.n} style={{ height: r.h }}>
            <RowHead $on={r.n === 8}>{r.n}</RowHead>
            {r.a && (
              <Cell rowSpan={r.a[1]} $bottom={THICK} $right={PAGE_SIDE} $left={DASH}>
                <span>{r.a[0]}</span>
              </Cell>
            )}
            <Doctor $bg="#0c0c0c" $color={red(r.b) || "#000"} $bottom={r.thick ? THICK : "1px dotted #fff"} $left="1px dotted #fff">
              <span>{strip(r.b)}</span>
            </Doctor>
            <Cell $bottom={bottom} $left={DASH}>
              <span>{r.c}</span>
            </Cell>
            {dayCols.map((k) => {
              const v = r.t?.[k] || "";
              const yellow = yellowCols.includes(k) || (k === "H" && r.n === 13);
              return (
                <Cell key={k} $digits $size={12} $bg={yellow ? "#ff0" : "#fff"} $color={red(v)} $bottom={bottom} $left={k === "K" ? THICK : DASH}>
                  <span>{strip(v)}</span>
                </Cell>
              );
            })}
            <PageBreak $bottom={GRAY} />
            <MarkCell $bottom={GRAY} $left={PAGE_EDGE}>{r.n === 14 && <TinyMark>Page 5</TinyMark>}</MarkCell>
            {i === 0 && <Outside colSpan={15} rowSpan={rows.length} />}
          </tr>
        );
      })}
    </tbody>
  </Grid>
);

const Label = ({ children, open }: { children: string; open?: boolean }) => (
  <GroupLabel $open={open}>
    <span>{children}</span>
    {open && <Launcher />}
  </GroupLabel>
);

export default function App() {
  return (
    <Page>
      <Global />
      <TitleBar>
        <QuickAccess>
          <ExcelIcon s={23} />
          <QuickSep $gap={6} />
          <SaveIcon />
          <QuickHistory>
            <UndoIcon />
            <Caret c="#111" s={6} />
            <UndoIcon redo />
            <Caret c="#aaa" s={6} />
          </QuickHistory>
          <QuickSep $gap={7} />
          <svg width="9" height="9" viewBox="0 0 9 9"><path d="M0 1h9" stroke="#111" strokeWidth="1.500" /><path d="M1 4h7L4.500 8z" fill="#111" /></svg>
        </QuickAccess>
        <TitleText dir="ltr">جدول مواعيد الاطباء 2024 - Microsoft Excel (Product Activation Failed)</TitleText>
        <WindowButtons>
          <button aria-label="Restore">
            <svg width="16" height="16" viewBox="0 0 16 16" fill="none" stroke="#111" strokeWidth="1.500">
              <rect x="1" y="4" width="11" height="11" rx="2" />
              <path d="M4 1h7c3 0 4 1 4 4v7" />
            </svg>
          </button>
          <button aria-label="Close"><X size={22} strokeWidth={1.5} /></button>
        </WindowButtons>
      </TitleBar>

      <TabRow>
        <Tab $w={85} $kind="file">File</Tab>
        <Tab $w={68} $kind="active">Home</Tab>
        <Tab $w={69}>Insert</Tab>
        <Tab $w={111}>Page Layout</Tab>
        <Tab $w={95}>Formulas</Tab>
        <Tab $w={58}>Data</Tab>
        <Tab $w={79}>Review</Tab>
        <Tab $w={62}>View</Tab>
        <TabTools>
          <svg width="14" height="12" viewBox="0 0 14 12" fill="none" stroke="#555" strokeWidth="1.300"><path d="m1 7 6-6 6 6v4l-4-1-2-3-2 3-4 1z" /></svg>
          <svg width="24" height="24" viewBox="0 0 24 24">
            <circle cx="12" cy="12" r="12" fill="#4a83d3" />
            <text x="8" y="18" fontSize="18" fontWeight="700" fontFamily="Noto Sans" fill="#fff">?</text>
          </svg>
          <svg width="18" height="8" viewBox="0 0 18 8" fill="none" stroke="#555" strokeWidth="1.600"><rect x="1" y="1" width="16" height="6" rx="1" /></svg>
          <svg width="18" height="17" viewBox="0 0 18 17" fill="#fff" stroke="#555" strokeWidth="1.500"><path d="M6 1h11v10H6zM10 4h4v4" /><path d="M1 6h10v10H1zM4 10h4v3H4z" /></svg>
          <svg width="18" height="15" viewBox="0 0 18 15" fill="none" stroke="#555" strokeWidth="1.300"><path d="M1 1h5l3 3 3-3h5v3l-4 3.500 4 3.500v3h-5l-3-3-3 3H1v-3l4-3.500L1 4z" /></svg>
        </TabTools>
      </TabRow>

      <Ribbon>
        <Group $w={204}>
          <GroupBody>
            <BigButton $w={66}>
              <PasteIcon />
              Paste
              <TextRow><Caret /></TextRow>
            </BigButton>
            <Stack $pad="4px 0 0">
              <SmallButton><CutIcon />Cut</SmallButton>
              <SmallButton><CopyIcon />Copy<Caret /></SmallButton>
              <SmallButton><BrushIcon />Format Painter</SmallButton>
            </Stack>
          </GroupBody>
          <Label open>Clipboard</Label>
        </Group>

        <Group $w={266}>
          <GroupBody $pad="13px 0 0 4px">
            <Stack $gap={11}>
              <Line $h={33}>
                <Combo $w={140}>
                  <select aria-label="Font"><option>Traditional Arabic</option></select>
                  <Caret />
                </Combo>
                <Combo $w={57}>
                  <select aria-label="Font size"><option>18</option></select>
                  <Caret />
                </Combo>
                <Tool $w={31} aria-label="Grow font"><GrowA s={25} up /></Tool>
                <Tool $w={30} aria-label="Shrink font"><GrowA s={19} /></Tool>
              </Line>
              <Line>
                <Tool $w={31} $serif $on>B</Tool>
                <Tool $w={31} $serif><i>I</i></Tool>
                <Tool $w={31} $serif $thin><u>U</u></Tool>
                <Caret />
                <Divider $m={11} />
                <BorderIcon />
                <Line $ml={5}><Caret /></Line>
                <Divider $m={9} />
                <Line $gap={5}><BucketIcon /><Caret /></Line>
                <Line $gap={5} $ml={6}><FontColorIcon /><Caret /></Line>
              </Line>
            </Stack>
          </GroupBody>
          <Label open>Font</Label>
        </Group>

        <Group $w={377}>
          <GroupBody $pad="13px 0 0 4px">
            <Stack $gap={14} $w={205}>
              <Line>
                <Tool $w={32} aria-label="Top align"><Lines k="top" /></Tool>
                <Tool $w={32} $on aria-label="Middle align"><Lines k="mid" /></Tool>
                <Tool $w={32} aria-label="Bottom align"><Lines k="bottom" /></Tool>
                <Divider $m={4} />
                <Tool $w={44} aria-label="Orientation"><OrientIcon /><Caret /></Tool>
                <Divider $m={3} />
                <Tool $w={46} aria-label="Text direction"><RtlIcon />&nbsp;<Caret /></Tool>
              </Line>
              <Line>
                <Tool $w={32} aria-label="Align left"><Lines k="left" /></Tool>
                <Tool $w={32} $on aria-label="Center"><Lines k="center" /></Tool>
                <Tool $w={32} aria-label="Align right"><Lines k="right" /></Tool>
                <Divider $m={4} />
                <Tool $w={30} aria-label="Decrease indent"><IndentIcon /></Tool>
                <Tool $w={30} aria-label="Increase indent"><IndentIcon out /></Tool>
              </Line>
            </Stack>
            <Divider $h={74} $m={0} />
            <Stack $gap={14} $pad="2px 0 0 5px">
              <Tool $w={105} $on><WrapIcon />Wrap Text</Tool>
              <SmallButton $h={30} $pl={3}><MergeIcon />Merge &amp; Center<Caret /></SmallButton>
            </Stack>
          </GroupBody>
          <Label open>Alignment</Label>
        </Group>

        <Group $w={186}>
          <GroupBody $pad="13px 0 0 5px">
            <Stack $gap={11}>
              <Combo $w={177}>
                <select aria-label="Number format"><option>General</option></select>
                <Caret />
              </Combo>
              <Line>
                <Tool $w={32} $serif>$</Tool>
                <Caret />
                <Tool $w={38} $size={20}>%</Tool>
                <Tool $w={26} $serif $lift={12}>,</Tool>
                <Divider $m={7} />
                <Tool $w={28} aria-label="Increase decimal"><DecimalIcon /></Tool>
                <Tool $w={30} aria-label="Decrease decimal"><DecimalIcon dec /></Tool>
              </Line>
            </Stack>
          </GroupBody>
          <Label open>Number</Label>
        </Group>

        <Group $w={233}>
          <GroupBody $pad="0 0 0 4px">
            <BigButton $w={94}><CondIcon />Conditional<TextRow>Formatting <Caret /></TextRow></BigButton>
            <BigButton $w={70}><TableIcon />Format<TextRow>as Table <Caret /></TextRow></BigButton>
            <BigButton $w={60}><CellStyleIcon />Cell<TextRow>Styles <Caret /></TextRow></BigButton>
          </GroupBody>
          <Label>Styles</Label>
        </Group>

        <Group $w={182}>
          <GroupBody $pad="0 0 0 3px">
            <BigButton $w={58}><InsertIcon />Insert<TextRow><Caret /></TextRow></BigButton>
            <BigButton $w={58}><DeleteIcon />Delete<TextRow><Caret /></TextRow></BigButton>
            <BigButton $w={58}><FormatIcon />Format<TextRow><Caret /></TextRow></BigButton>
          </GroupBody>
          <Label>Cells</Label>
        </Group>

        <Group $w={236}>
          <GroupBody $pad="0 0 0 9px">
            <Stack $pad="3px 0 0" $w={107}>
              <SmallButton $h={30}><SigmaIcon />AutoSum<Caret /></SmallButton>
              <SmallButton $h={30}><FillIcon />Fill<Caret /></SmallButton>
              <SmallButton $h={30}><ClearIcon />Clear<Caret /></SmallButton>
            </Stack>
            <BigButton $w={58}><SortIcon />Sort &amp;<TextRow>Filter <Caret /></TextRow></BigButton>
            <BigButton $w={58}><FindIcon />Find &amp;<TextRow>Select <Caret /></TextRow></BigButton>
          </GroupBody>
          <Label>Editing</Label>
        </Group>
      </Ribbon>

      <FormulaBar>
        <NameBox>
          <input aria-label="Name box" defaultValue="B8" />
          <Caret c="#333" s={12} />
        </NameBox>
        <FxPill><i /><b>f<small>x</small></b></FxPill>
        <FormulaInput aria-label="Formula" dir="rtl" defaultValue="د/حازم ربيع" />
        <FormulaDrop aria-label="Expand formula bar">
          <svg width="12" height="9" viewBox="0 0 12 9"><path d="M0 0h3l3 3 3-3h3v4L6 9 0 4z" fill="#555" /></svg>
        </FormulaDrop>
      </FormulaBar>

      <SheetArea>
        <VScroll>
          <Arrow to="up" />
          <VThumb><Grip v /></VThumb>
          <Arrow to="down" />
        </VScroll>
        <Canvas dir="rtl">
          <Sheet />
          <PageMark dir="ltr">Page 1</PageMark>
        </Canvas>
        <Edge />
      </SheetArea>

      <TabStrip>
        <HScroll>
          <Arrow to="left" />
          <HThumb><Grip /></HThumb>
          <Arrow to="right" />
        </HScroll>
        <Split />
        <SheetTabs>
          <SheetTab $w={46} aria-label="Insert sheet">
            <svg width="24" height="20" viewBox="0 0 24 20">
              <path d="M5 5h17v10l-4 4H8z" fill="#dbe8fa" stroke="#4a67a0" />
              <path d="M7 0v14M0 7h14M2 2l10 10M12 2 2 12" stroke="#e09a2c" strokeWidth="1.500" />
            </svg>
          </SheetTab>
          <SheetTab $w={80}>Sheet1</SheetTab>
          <SheetTab $w={86} $on>Sheet3</SheetTab>
        </SheetTabs>
        <NavButtons>
          {["M1 1v10M9 1v10L3 6z", "M8 1v10L2 6z", "M2 1v10l6-5z", "M9 1v10M1 1v10l6-5z"].map((d) => (
            <svg key={d} width="10" height="12" viewBox="0 0 10 12" fill="#444" stroke="#444"><path d={d} /></svg>
          ))}
        </NavButtons>
      </TabStrip>

      <StatusBar>
        <Ready>Ready</Ready>
        <StatusRight>
          <ViewButton aria-label="Normal view">
            <svg width="20" height="15" viewBox="0 0 20 15" fill="#fff" stroke="#666"><path d="M.5.500h19v14H.5zM.5 5h19M.5 10h19M7 .5v14M13 .5v14" /></svg>
          </ViewButton>
          <ViewButton aria-label="Page layout view">
            <svg width="20" height="17" viewBox="0 0 20 17" fill="#b5b8bc" stroke="#555"><path d="M.5.500h19v16H.5z" /><path d="M5 3h10v11H5zM7 6h6M7 8.500h6M7 11h6" fill="#fff" /></svg>
          </ViewButton>
          <ViewButton $on aria-label="Page break preview">
            <svg width="20" height="17" viewBox="0 0 20 17" fill="#9a9da1" stroke="#555"><path d="M.5.500h19v16H.5z" /><path d="M2 2h5v8H2zM8 2h5v8H8z" fill="#fff" stroke="none" /></svg>
          </ViewButton>
          <ZoomValue>55%</ZoomValue>
          <RoundButton aria-label="Zoom out"><svg width="12" height="4"><path d="M0 2h12" stroke="#666" strokeWidth="3" /></svg></RoundButton>
          <Slider type="range" aria-label="Zoom" defaultValue={26} />
          <RoundButton aria-label="Zoom in"><svg width="12" height="12"><path d="M0 6h12M6 0v12" stroke="#666" strokeWidth="3" /></svg></RoundButton>
        </StatusRight>
      </StatusBar>

      <Taskbar>
        <Weather aria-label="Weather"><WeatherIcon /></Weather>
        <Apps>
          <AppButton aria-label="Start">
            <svg width="35" height="35" viewBox="0 0 35 35"><path d="M0 1c0-1 0-1 1-1h16v17H0zM18 0h16c1 0 1 0 1 1v16H18zM0 18h17v17H1c-1 0-1 0-1-1zM18 18h17v16c0 1 0 1-1 1H18z" fill="#41b8fb" /></svg>
          </AppButton>
          <SearchBox>
            <Search size={23} strokeWidth={2} />
            <input aria-label="Search" placeholder="Search web & PC" />
            <Trees />
          </SearchBox>
          <AppButton aria-label="Task view">
            <svg width="36" height="35" viewBox="0 0 36 35"><rect y="10" width="27" height="25" rx="2" fill="#666a63" /><rect x="9" width="27" height="25" rx="2" fill="#f2f2f2" /><path d="M9 10h18v15H9z" fill="#bdbdbd" /></svg>
          </AppButton>
          <AppButton $run aria-label="File Explorer"><Folder /></AppButton>
          <AppButton aria-label="ChatGPT"><SiOpenai size={36} color="#fff" /></AppButton>
          <AppButton aria-label="Zoom">
            <svg width="36" height="36" viewBox="0 0 36 36"><circle cx="18" cy="18" r="18" fill="#1f6bf2" /><text x="18" y="21" textAnchor="middle" fontSize="10" fontWeight="700" fontFamily="Noto Sans" fill="#fff">zoom</text></svg>
          </AppButton>
          <AppButton aria-label="LinkedIn">
            <svg width="32" height="32" viewBox="0 0 32 32"><rect width="32" height="32" rx="3" fill="#0a66c2" /><path d="M6 12h4v14H6zM13 12h4v2c3-4 9-3 9 3v9h-4v-8c0-4-5-4-5 0v8h-4z" fill="#fff" /><circle cx="8" cy="8" r="2.500" fill="#fff" /></svg>
          </AppButton>
          <AppButton aria-label="WhatsApp"><SiWhatsapp size={36} color="#25d366" /><Badge $bg="#4cc2ff" $fg="#111">1</Badge></AppButton>
          <AppButton aria-label="Calculator"><Calc /></AppButton>
          <AppButton aria-label="Chrome"><Chrome /></AppButton>
          <AppButton $run aria-label="Chrome profile"><Chrome /><Badge $bg="#7e57c2" $fg="#ddd">R</Badge></AppButton>
          <AppButton $run aria-label="McAfee"><McAfee /></AppButton>
          <AppButton $on aria-label="Excel"><ExcelIcon s={34} /></AppButton>
          <Khamsat dir="rtl">خـ5ـسات</Khamsat>
        </Apps>
        <Tray>
          <ChevronUp size={24} />
          <Lang>ع</Lang>
          <Wifi size={26} />
          <TrayIcon><Volume2 size={26} /></TrayIcon>
          <svg width="25" height="17" viewBox="0 0 25 17" fill="none" stroke="#fff" strokeWidth="1.700"><rect x="1" y="1" width="20" height="15" rx="3" /><path d="M4 4h6v9H4z" fill="#fff" stroke="none" /><path d="M23.500 6v5" strokeWidth="2.500" /></svg>
          <Clock>10:24 PM<br />6/22/2025</Clock>
        </Tray>
      </Taskbar>
    </Page>
  );
}
